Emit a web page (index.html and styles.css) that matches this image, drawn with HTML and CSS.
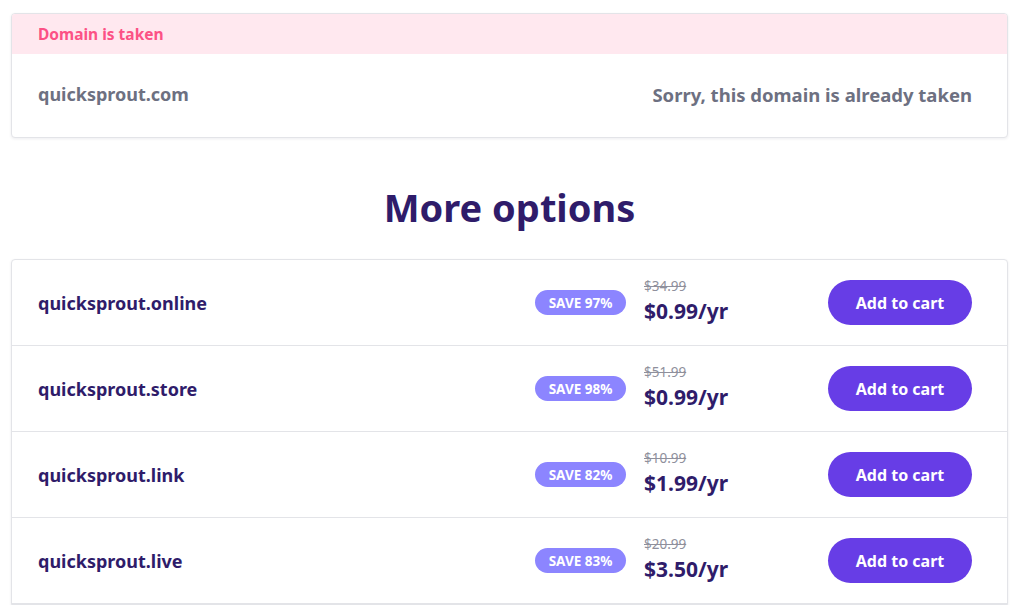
FILE: index.html
```html
<!DOCTYPE html>
<html lang="en">
<head>
<meta charset="utf-8">
<title>Domain search</title>
<link rel="stylesheet" href="styles.css">
</head>
<body>
<main class="page">
  <section class="card taken">
    <div class="taken-head">Domain is taken</div>
    <div class="taken-body">
      <span class="taken-name">quicksprout.com</span>
      <span class="taken-msg">Sorry, this domain is already taken</span>
    </div>
  </section>

  <h2 class="title">More options</h2>

  <section class="card list">
    <div class="row">
      <span class="name">quicksprout.online</span>
      <span class="badge">SAVE 97%</span>
      <div class="price"><span class="old">$34.99</span><span class="new">$0.99/yr</span></div>
      <button class="btn">Add to cart</button>
    </div>
    <div class="row">
      <span class="name">quicksprout.store</span>
      <span class="badge">SAVE 98%</span>
      <div class="price"><span class="old">$51.99</span><span class="new">$0.99/yr</span></div>
      <button class="btn">Add to cart</button>
    </div>
    <div class="row">
      <span class="name">quicksprout.link</span>
      <span class="badge">SAVE 82%</span>
      <div class="price"><span class="old">$10.99</span><span class="new">$1.99/yr</span></div>
      <button class="btn">Add to cart</button>
    </div>
    <div class="row">
      <span class="name">quicksprout.live</span>
      <span class="badge">SAVE 83%</span>
      <div class="price"><span class="old">$20.99</span><span class="new">$3.50/yr</span></div>
      <button class="btn">Add to cart</button>
    </div>
  </section>
</main>
</body>
</html>
```

FILE: styles.css
```css
* { box-sizing: border-box; }
html, body { margin: 0; padding: 0; background: #ffffff; }
body {
  font-family: "Noto Sans", Lato, "Liberation Sans", sans-serif;
  overflow: hidden;
}
.page {
  padding: 13px 16px 0 11px;
}
.card {
  background: #fff;
  border: 1px solid #e3e4e8;
  border-radius: 4px;
  box-shadow: 0 1px 3px rgba(30, 30, 60, 0.08);
  overflow: hidden;
}
.taken-head {
  height: 40px;
  background: #ffe8ef;
  color: #fc5185;
  font-weight: 700;
  font-size: 15.5px;
  display: flex;
  align-items: center;
  padding-left: 26px;
}
.taken-body {
  height: 83px;
  display: flex;
  align-items: center;
  justify-content: space-between;
  padding: 0 35px 3px 26px;
  color: #6d7081;
  font-weight: 700;
}
.taken-name { font-size: 18px; }
.taken-msg { font-size: 18.5px; }
.title {
  margin: 44px 0 0;
  height: 77px;
  text-align: center;
  color: #2f1c6a;
  font-size: 38px;
  font-weight: 700;
  line-height: 50px;
}
.list { border-bottom-left-radius: 0; border-bottom-right-radius: 0; }
.row {
  height: 86px;
  display: flex;
  align-items: center;
  padding: 0 35px 0 26px;
  border-bottom: 1px solid #e3e4e8;
}
.name {
  flex: 1;
  font-size: 18px;
  font-weight: 700;
  color: #2f1c6a;
}
.badge {
  width: 91px;
  height: 25px;
  border-radius: 13px;
  background: #8c85ff;
  color: #fff;
  font-size: 13.5px;
  font-weight: 700;
  display: flex;
  align-items: center;
  justify-content: center;
  margin-right: 18px;
}
.price {
  width: 184px;
  display: flex;
  flex-direction: column;
  margin-top: 0;
}
.old {
  font-size: 13.5px;
  color: #8f909c;
  text-decoration: line-through;
  line-height: 17px;
}
.new {
  font-size: 21px;
  font-weight: 700;
  color: #2f1c6a;
  line-height: 32px;
}
.btn {
  width: 144px;
  height: 45px;
  border: none;
  border-radius: 23px;
  background: #673de6;
  color: #fff;
  font-family: inherit;
  font-size: 16px;
  font-weight: 700;
  cursor: pointer;
}
```
